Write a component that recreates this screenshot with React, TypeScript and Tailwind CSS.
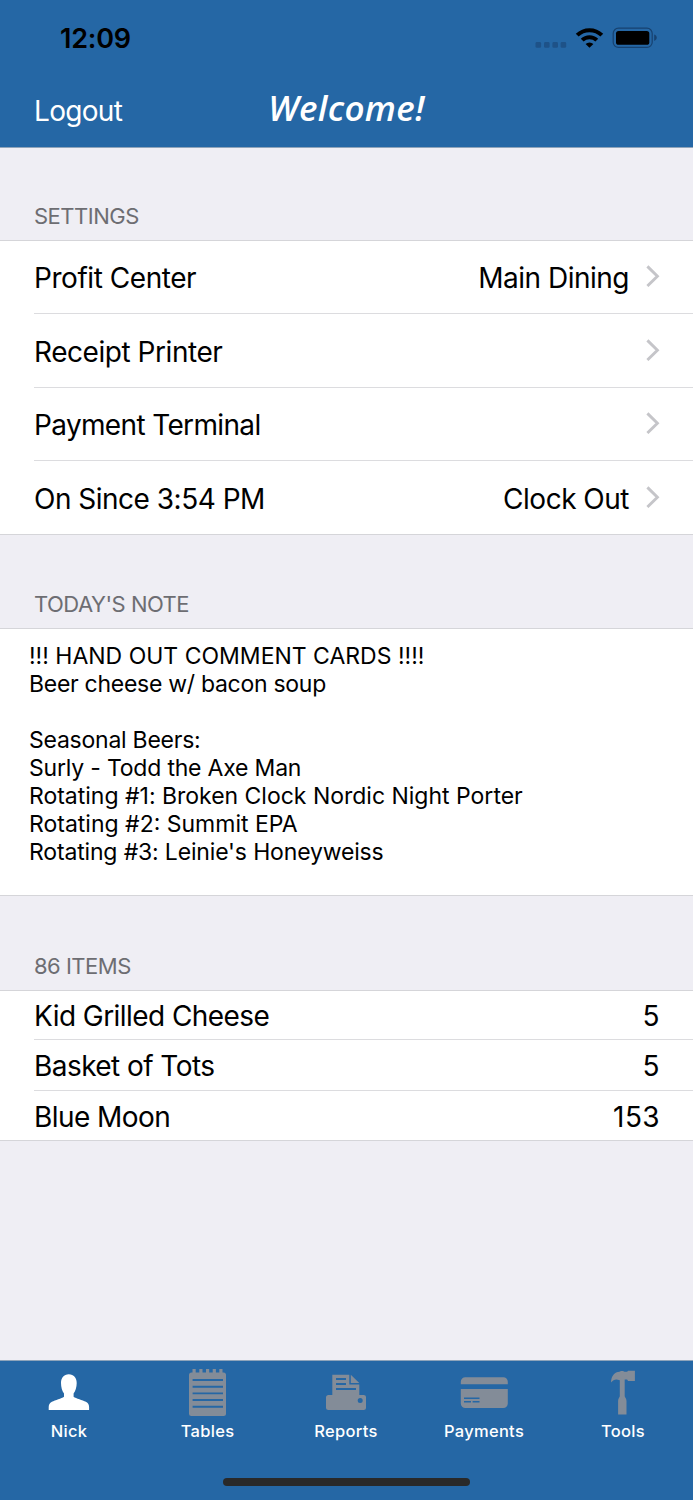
import type { ReactNode } from "react";

const settings = [
  { label: "Profit Center", value: "Main Dining", height: "h-[72px]", track: "tracking-[-0.45px]" },
  { label: "Receipt Printer", value: "", height: "h-[74px]", track: "tracking-[-0.45px]" },
  { label: "Payment Terminal", value: "", height: "h-[73px]", track: "tracking-[-0.65px]" },
  { label: "On Since 3:54 PM", value: "Clock Out", height: "h-[74px]", track: "tracking-[-0.5px]" },
];

const note = [
  { text: "!!! HAND OUT COMMENT CARDS !!!!", track: "tracking-normal" },
  { text: "Beer cheese w/ bacon soup", track: "tracking-[-0.28px]" },
  { text: "", track: "tracking-normal" },
  { text: "Seasonal Beers:", track: "tracking-[-0.24px]" },
  { text: "Surly - Todd the Axe Man", track: "tracking-[-0.2px]" },
  { text: "Rotating #1: Broken Clock Nordic Night Porter", track: "tracking-[-0.01px]" },
  { text: "Rotating #2: Summit EPA", track: "tracking-normal" },
  { text: "Rotating #3: Leinie's Honeyweiss", track: "tracking-[-0.16px]" },
];

const items = [
  { name: "Kid Grilled Cheese", count: 5, height: "h-[48px]" },
  { name: "Basket of Tots", count: 5, height: "h-[51px]" },
  { name: "Blue Moon", count: 153, height: "h-[50px]" },
];

const StatusIcons = () => (
  <svg width="124" height="22" viewBox="535 27 124 22" aria-hidden="true">
    <g fill="#1e5288">
      <rect x="535.5" y="42" width="5.6" height="5.8" rx="1.4" />
      <rect x="544" y="42" width="5.6" height="5.8" rx="1.4" />
      <rect x="552.4" y="42" width="5.6" height="5.8" rx="1.4" />
      <rect x="560.6" y="42" width="5.6" height="5.8" rx="1.4" />
    </g>
    <g fill="none" stroke="#000" strokeWidth="4">
      <path d="M577.2 35.2a17.5 17.5 0 0 1 24.6 0" />
      <path d="M582.2 40.2a10.4 10.4 0 0 1 14.6 0" />
    </g>
    <path d="M585.6 43.9a5.8 5.8 0 0 1 7.8 0L589.5 47.8z" />
    <rect x="613.2" y="28.2" width="39" height="19.2" rx="5.2" fill="none" stroke="#174270" strokeWidth="1.2" />
    <rect x="616" y="31" width="33.3" height="13.8" rx="2.6" />
    <path d="M654.2 34.6c3.4 1.2 3.4 5.2 0 6.4z" fill="#174270" />
  </svg>
);

const Chevron = () => (
  <svg width="14" height="22" viewBox="0 0 14 22" className="ml-[17px] shrink-0 -translate-y-0.5" aria-hidden="true">
    <path d="M1.4 1.4 11.4 11.2l-10 9.8" fill="none" stroke="#c5c5c9" strokeWidth="2.9" />
  </svg>
);

const PersonIcon = () => (
  <svg width="42" height="48" viewBox="48 1368 42 48" fill="#fff" aria-hidden="true">
    <path d="M68.8 1374.3c5 0 7.9 3.6 7.9 8.6 0 4.2-1.3 8-3.1 10.6v3.2c2.4 1.7 9 3.3 12.3 5.1 2.3 1.3 3.2 3 3.2 5.2v3H48.7v-3c0-2.2.9-3.9 3.2-5.2 3.3-1.8 9.7-3.4 12.1-5.1v-3.2c-1.8-2.6-3-6.4-3-10.6 0-5 2.8-8.6 7.8-8.6z" />
  </svg>
);

const NotepadIcon = () => (
  <svg width="38" height="48" viewBox="189 1368 38 48" fill="#838c98" aria-hidden="true">
    <rect x="189" y="1372.6" width="37" height="43.4" rx="2.5" />
    <path d="M192.5 1369h3.2v5h-3.2zM199.3 1369h3.2v5h-3.2zM206 1369h3.2v5H206zM212.7 1369h3.2v5h-3.2zM219.3 1369h3.2v5h-3.2z" />
    <path d="M192.6 1380h30.4M192.6 1386.7h30.4M192.6 1393.4h30.4M192.6 1400h30.4M192.6 1406.8h30.4" stroke="#2567a5" strokeWidth="1.9" />
  </svg>
);

const PrinterIcon = () => (
  <svg width="40" height="48" viewBox="326 1368 40 48" fill="#838c98" aria-hidden="true">
    <path d="M332.3 1374.7h17v9.8h10v10.9h-27zM350.8 1374.7l8.5 8.4h-8.5z" />
    <path d="M336 1379h10M336 1384h10M336 1389h20" stroke="#2567a5" strokeWidth="1.9" />
    <path fillRule="evenodd" d="M328.5 1395h35a2.5 2.5 0 0 1 2.5 2.5v10a2.5 2.5 0 0 1-2.5 2.5h-35a2.5 2.5 0 0 1-2.5-2.5v-10a2.5 2.5 0 0 1 2.5-2.5zM360.2 1398.1a2.5 2.5 0 1 0 0 5 2.5 2.5 0 0 0 0-5z" />
  </svg>
);

const CardIcon = () => (
  <svg width="48" height="48" viewBox="460 1368 48 48" fill="#838c98" aria-hidden="true">
    <path d="M460.8 1384.3v-2.6a4.5 4.5 0 0 1 4.5-4.5h38a4.5 4.5 0 0 1 4.5 4.5v2.6zM460.8 1389h47v14.6a4.5 4.5 0 0 1-4.5 4.5h-38a4.5 4.5 0 0 1-4.5-4.5z" />
    <path d="M464 1398.3h15.5M464 1401.7h7M472.6 1401.7h6.9" stroke="#2567a5" strokeWidth="1.5" />
  </svg>
);

const HammerIcon = () => (
  <svg width="26" height="48" viewBox="610 1368 26 48" fill="#838c98" aria-hidden="true">
    <path d="M611 1382.5c.2-6.6 3.6-10.8 8.5-10.8.6-1 4.4-1 5 0h2.6l1-.9h6.8v10.2h-6.8l-1-1.5h-2.4v16.8c.4 1.3 1.8 2.7 1.8 4.7v13.6h-8.4V1401c0-2 1.3-3.4 1.7-4.7v-16c-3.9-1.5-6.2-.8-8.8 2.2z" />
  </svg>
);

const tabs: { label: string; icon: ReactNode; width: string }[] = [
  { label: "Nick", icon: <PersonIcon />, width: "w-[138px]" },
  { label: "Tables", icon: <NotepadIcon />, width: "w-[139px]" },
  { label: "Reports", icon: <PrinterIcon />, width: "w-[138px]" },
  { label: "Payments", icon: <CardIcon />, width: "w-[138px]" },
  { label: "Tools", icon: <HammerIcon />, width: "w-[140px]" },
];

const SectionHeader = ({ title, className }: { title: string; className: string }) => (
  <h2
    className={`flex items-end border-b border-[#d5d5d9] pl-[34px] pb-[9px] text-[22px] leading-[30px] font-normal tracking-[-0.5px] text-[#6d6d72] ${className}`}
  >
    {title}
  </h2>
);

const App = () => {
  return (
    <div className="flex h-[1500px] w-[693px] flex-col overflow-hidden bg-[#efeef4] font-['Inter','Liberation_Sans',sans-serif] text-black">
      <header className="h-[148px] border-b border-[#8fa4ba] bg-[#2567a5]">
        <div className="flex h-[76px] items-center justify-between pl-[60px] pr-[34px]">
          <span className="pt-0.5 text-[27px] font-semibold tracking-[-0.2px]">12:09</span>
          <StatusIcons />
        </div>
        <div className="grid h-[71px] grid-cols-3 text-white">
          <button className="pb-0.5 pl-[34px] text-left text-[28px] tracking-[-0.7px]">Logout</button>
          <h1 className="pt-2 text-center font-['Open_Sans','Noto_Sans',sans-serif] text-[35px] leading-[48px] font-[650] tracking-[0.3px] italic">
            Welcome!
          </h1>
        </div>
      </header>

      <main className="flex-1">
        <SectionHeader title="SETTINGS" className="h-[93px]" />
        <ul className="border-b border-[#d5d5d9] bg-white pl-[34px]">
          {settings.map((row, index) => (
            <li
              key={row.label}
              className={`flex items-center justify-between pt-0.5 pr-[33px] text-[28px] ${row.height} ${index > 0 ? "border-t border-[#dcdcdf]" : ""}`}
            >
              <span className={row.track}>{row.label}</span>
              <span className="flex items-center tracking-[-0.5px]">
                {row.value}
                <Chevron />
              </span>
            </li>
          ))}
        </ul>

        <SectionHeader title="TODAY'S NOTE" className="h-[94px]" />
        <div className="h-[267px] border-b border-[#d5d5d9] bg-white pl-[29px] pt-[13px] text-[23px] leading-[28px]">
          {note.map((line, index) => (
            <p key={index} className={`h-[28px] whitespace-nowrap ${line.track}`}>
              {line.text}
            </p>
          ))}
        </div>

        <SectionHeader title="86 ITEMS" className="h-[95px]" />
        <ul className="border-b border-[#d5d5d9] bg-white pl-[34px]">
          {items.map((item, index) => (
            <li
              key={item.name}
              className={`flex items-center justify-between pt-0.5 pr-[33px] text-[28px] ${item.height} ${index > 0 ? "border-t border-[#dcdcdf]" : ""}`}
            >
              <span className="tracking-[-0.56px]">{item.name}</span>
              <span className="tracking-[0.4px]">{item.count}</span>
            </li>
          ))}
        </ul>
      </main>

      <footer className="flex h-[140px] flex-col items-center border-t border-[#8fa4ba] bg-[#2567a5]">
        <nav className="flex h-[117px] w-full">
          {tabs.map((tab) => (
            <button
              key={tab.label}
              className={`flex flex-col items-center pt-[7px] text-[16.5px] leading-[24px] font-medium tracking-[0.3px] text-white ${tab.width}`}
            >
              {tab.icon}
              <span className="mt-[3px]">{tab.label}</span>
            </button>
          ))}
        </nav>
        <div className="h-2 w-[247px] rounded-full bg-[#292929]" />
      </footer>
    </div>
  );
};

export default App;
